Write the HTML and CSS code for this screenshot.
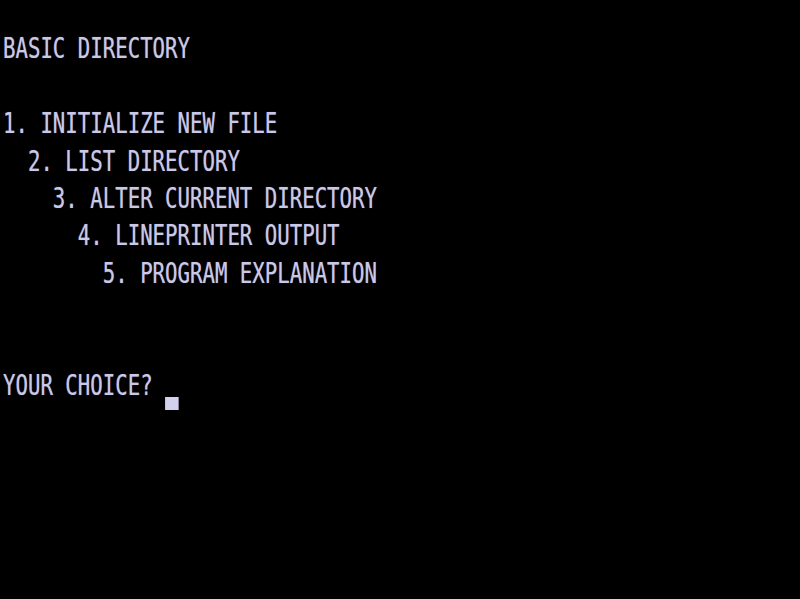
FILE: index.html
```html
<!DOCTYPE html>
<html>
<head>
<meta charset="utf-8">
<link rel="stylesheet" href="styles.css">
</head>
<body>
<pre class="screen">

BASIC DIRECTORY

1. INITIALIZE NEW FILE
  2. LIST DIRECTORY
    3. ALTER CURRENT DIRECTORY
      4. LINEPRINTER OUTPUT
        5. PROGRAM EXPLANATION


YOUR CHOICE? <span class="cursor"></span></pre>
</body>
</html>
```
FILE: styles.css
```css
html, body {
  margin: 0;
  padding: 0;
  background: #000;
  width: 800px;
  height: 599px;
  overflow: hidden;
}
.screen {
  margin: 0;
  font-family: "DejaVu Sans Mono", "Liberation Mono", monospace;
  font-size: 29px;
  line-height: 37.4px;
  color: #c9c8e6;
  transform-origin: 0 0;
  transform: translate(3px, -7px) scaleX(0.714);
  text-shadow: 0 0 1px rgba(200, 200, 240, 0.6);
}
.cursor {
  display: inline-block;
  width: 19px;
  height: 13px;
  background: #d2d2ee;
  vertical-align: -15px;
}
```
